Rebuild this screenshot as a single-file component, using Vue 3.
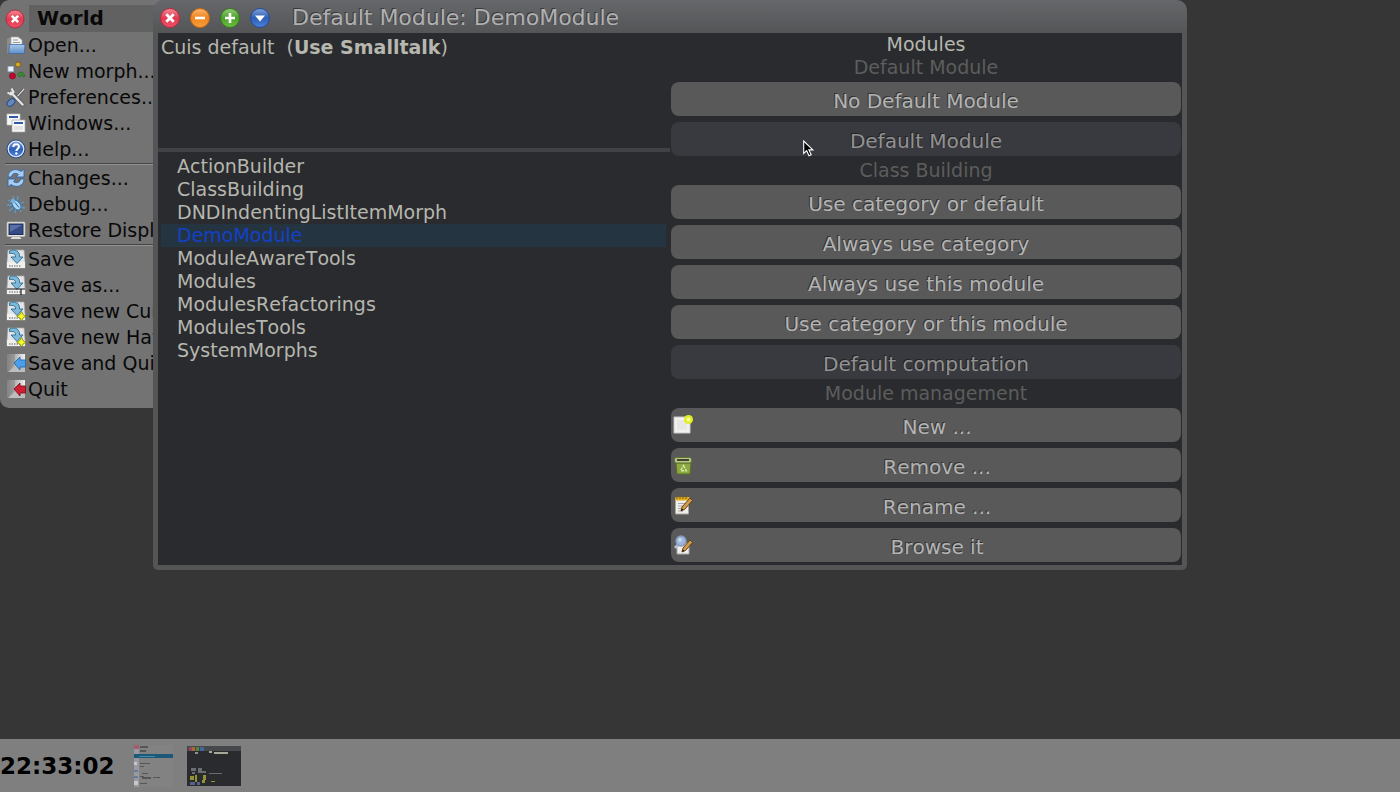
<script setup>
import { ref } from 'vue'

const menuGroups = [
  [
    { icon: 'open', label: 'Open...' },
    { icon: 'morph', label: 'New morph...' },
    { icon: 'prefs', label: 'Preferences...' },
    { icon: 'windows', label: 'Windows...' },
    { icon: 'help', label: 'Help...' },
  ],
  [
    { icon: 'changes', label: 'Changes...' },
    { icon: 'debug', label: 'Debug...' },
    { icon: 'display', label: 'Restore Display' },
  ],
  [
    { icon: 'save', label: 'Save' },
    { icon: 'saveas', label: 'Save as...' },
    { icon: 'savenew', label: 'Save new Cuis' },
    { icon: 'savenew', label: 'Save new Haver' },
    { icon: 'savequit', label: 'Save and Quit' },
    { icon: 'quit', label: 'Quit' },
  ],
]

const modules = [
  'ActionBuilder',
  'ClassBuilding',
  'DNDIndentingListItemMorph',
  'DemoModule',
  'ModuleAwareTools',
  'Modules',
  'ModulesRefactorings',
  'ModulesTools',
  'SystemMorphs',
]
const selected = ref('DemoModule')

const sections = [
  {
    title: 'Default Module',
    buttons: [{ label: 'No Default Module' }, { label: 'Default Module', active: true }],
  },
  {
    title: 'Class Building',
    buttons: [
      { label: 'Use category or default' },
      { label: 'Always use category' },
      { label: 'Always use this module' },
      { label: 'Use category or this module' },
      { label: 'Default computation', active: true },
    ],
  },
  {
    title: 'Module management',
    buttons: [
      { label: 'New ...', icon: 'new' },
      { label: 'Remove ...', icon: 'remove' },
      { label: 'Rename ...', icon: 'rename' },
      { label: 'Browse it', icon: 'browse' },
    ],
  },
]
</script>

<template>
  <div class="desktop">
    <svg class="defs" aria-hidden="true">
      <defs>
        <linearGradient id="gRed" x2="0" y2="1"><stop stop-color="#f58a96" /><stop offset=".5" stop-color="#e23a50" /><stop offset="1" stop-color="#ee5266" /></linearGradient>
        <linearGradient id="gOrange" x2="0" y2="1"><stop stop-color="#f9b56c" /><stop offset=".5" stop-color="#ee8420" /><stop offset="1" stop-color="#f8a03c" /></linearGradient>
        <linearGradient id="gGreen" x2="0" y2="1"><stop stop-color="#93cc78" /><stop offset=".5" stop-color="#4c9f2b" /><stop offset="1" stop-color="#6cc044" /></linearGradient>
        <linearGradient id="gBlue" x2="0" y2="1"><stop stop-color="#7fa2dc" /><stop offset=".5" stop-color="#2e5fb4" /><stop offset="1" stop-color="#4a82dc" /></linearGradient>
        <linearGradient id="gFolder" x2="0" y2="1"><stop stop-color="#a9c8ea" /><stop offset="1" stop-color="#5f8fc9" /></linearGradient>
        <linearGradient id="gDoor" x2="1" y2="0"><stop stop-color="#7c7c7c" /><stop offset=".5" stop-color="#b9b9b9" /><stop offset="1" stop-color="#f0f0f0" /></linearGradient>
      </defs>
    </svg>

    <main class="canvas">
      <nav class="world" aria-label="World">
        <header class="world-head">
          <button class="orb" aria-label="Close menu">
            <svg viewBox="0 0 20 20"><circle cx="10" cy="10" r="9" fill="url(#gRed)" stroke="#b52c3f" /><path d="M6.8 6.8l6.4 6.4M13.2 6.8l-6.4 6.4" stroke="#fff" stroke-width="2.6" /></svg>
          </button>
          <h1>World</h1>
        </header>
        <ul v-for="(group, g) in menuGroups" :key="g" class="group">
          <li v-for="item in group" :key="item.label">
            <button class="item">
              <svg viewBox="0 0 20 20" aria-hidden="true">
                <g v-if="item.icon === 'open'">
                  <path d="M2 3h5l1 2v13H1V4z" fill="#8b8b8b" /><path d="M5 2h7l4 3v8H5z" fill="#f2f2f0" stroke="#aaa" stroke-width=".7" /><path d="M7 5h5M7 7.5h7" stroke="#999" /><path d="M3.5 9.5h15.5l-.7 9H2.8z" fill="url(#gFolder)" stroke="#3c6ca8" stroke-width=".8" />
                </g>
                <g v-else-if="item.icon === 'morph'">
                  <rect x="2" y="5.5" width="5.5" height="5" fill="#eef4fa" stroke="#9db4cc" stroke-width=".8" /><circle cx="12" cy="3.5" r="2.6" fill="#d6a628" stroke="#785608" stroke-width=".8" /><circle cx="6.5" cy="15" r="3" fill="#c4082c" stroke="#80041c" stroke-width=".7" /><path d="M11.5 14c1-4 6-4 7.500 1l-2 1-1.500-2-1.500 2z" fill="#3f8a34" stroke="#286424" stroke-width=".7" />
                </g>
                <g v-else-if="item.icon === 'prefs'">
                  <path d="M17.5 2.5l-9 10" stroke="#333" stroke-width="2.4" /><path d="M18 2l-9 10" stroke="#ddd" stroke-width="1.3" /><path d="M5 5.5l11.500 12" stroke="#5c5c5c" stroke-width="4" stroke-linecap="round" /><path d="M5 5.500l11.500 12" stroke="#e2e2e2" stroke-width="2.500" stroke-linecap="round" /><path d="M1.500 5.500l3.500 2 2.500-2.500-2-3.500" fill="none" stroke="#e6e6e6" stroke-width="2" /><ellipse cx="5" cy="15.500" rx="4.500" ry="3" transform="rotate(-42 5 15.500)" fill="#6689bd" stroke="#284b86" />
                </g>
                <g v-else-if="item.icon === 'windows'">
                  <path d="M1 1h13v11H1z" fill="#f5f5f5" stroke="#ccc" stroke-width=".6" /><path d="M3 4h9" stroke="#2c5ba8" stroke-width="2" /><path d="M6 7h13v12H6z" fill="#f7f7f7" stroke="#aaa" stroke-width=".7" /><path d="M8 10h9" stroke="#2c5ba8" stroke-width="2" /><path d="M8 13h9v4H8z" fill="#e2e2e0" />
                </g>
                <g v-else-if="item.icon === 'help'">
                  <circle cx="10" cy="10" r="9" fill="#2b58a5" stroke="#254477" /><circle cx="10" cy="10" r="7.8" fill="url(#gBlue)" stroke="#dbe6f4" stroke-width="1.3" /><path d="M7.3 8c0-3.600 5.700-3.600 5.700-.4 0 2-2.700 2.200-2.700 4.500" fill="none" stroke="#fff" stroke-width="2" /><circle cx="10.3" cy="14.5" r="1.2" fill="#fff" />
                </g>
                <g v-else-if="item.icon === 'changes'">
                  <g fill="#a9cbee" stroke="#2e65a8" stroke-width=".9" stroke-linejoin="round"><path d="M2 9C2 2 10-.5 15 3.500L18 1v8h-8l2.500-2.500C9 4 6 6 5.500 9z" /><path d="M18 11c0 7-8 9.500-13 5.500L2 19v-8h8l-2.500 2.500c3.500 2.500 6.500.5 7-2.500z" /></g>
                </g>
                <g v-else-if="item.icon === 'debug'">
                  <path d="M7 2l1 5M12 2l-1 6M2 6l5 3M1 11h6M3 17l5-4M9 19l1-5M18 8l-5 2M19 14l-5-1M15 18l-2-4" stroke="#609bc6" stroke-width="1.3" /><ellipse cx="10.5" cy="11" rx="3.6" ry="5.5" transform="rotate(-38 10.5 11)" fill="#a8d5f5" stroke="#2d6fa6" /><circle cx="7" cy="7" r="2.2" fill="#79b2dc" /><path d="M9 8.5l4 5" stroke="#2b639b" />
                </g>
                <g v-else-if="item.icon === 'display'">
                  <rect x="1" y="2" width="18" height="14.5" rx="1" fill="#e8e8e3" stroke="#b4b4ae" stroke-width=".7" /><rect x="3" y="4" width="14" height="10.5" fill="#344b86" stroke="#1d2c58" /><path d="M4 5h12l-12 7z" fill="#5870a9" /><path d="M6 17h8l1.500 2h-11z" fill="#ddd" />
                </g>
                <g v-else-if="item.icon === 'save' || item.icon === 'saveas' || item.icon === 'savenew'">
                  <path d="M2 1h16l1 12v6H1v-6z" fill="#e3e5e6" stroke="#aaa" stroke-width=".7" /><path d="M1 13h18v6H1z" fill="#f0f0ee" /><path d="M3 17h12" stroke="#aaa" stroke-dasharray="1.5 1" stroke-width="2" /><path d="M3.5 2C9-.5 14 2 13.500 8H17l-6 6.500L5 8h4.500c.3-3-2-4-6-3.500z" fill="#80b9d8" stroke="#2b6e94" stroke-width=".9" />
                  <path v-if="item.icon === 'saveas'" d="M1 14h18M15 14v6" stroke="#111" stroke-width="1.1" />
                  <path v-if="item.icon === 'savenew'" d="M15.5 10.500l1.500 3 3 1.800-3 1.700-1.500 3-1.700-3-3-1.700 3-1.800z" fill="#f5fa26" stroke="#878b08" stroke-width=".9" />
                </g>
                <g v-else>
                  <path d="M1 1h18v18H1z" fill="url(#gDoor)" /><path d="M1 19L9 11V1H1z" fill="#888" opacity=".55" /><path d="M9 13h10v6H2z" fill="#bdbdbd" />
                  <path d="M8 10l6-6v3h5.500v7H14v3z" :fill="item.icon === 'quit' ? '#cf2036' : '#4a9fe8'" :stroke="item.icon === 'quit' ? '#86101f' : '#2768b0'" stroke-width=".9" />
                </g>
              </svg>
              <span>{{ item.label }}</span>
            </button>
          </li>
        </ul>
      </nav>

      <section class="window" aria-label="Default Module: DemoModule">
        <header class="titlebar">
          <button class="orb" aria-label="Close">
            <svg viewBox="0 0 20 20"><circle cx="10" cy="10" r="9.5" fill="url(#gRed)" stroke="#b52c3f" /><path d="M6.3 6.3l7.4 7.4M13.7 6.3l-7.4 7.4" stroke="#fff" stroke-width="2.8" /></svg>
          </button>
          <button class="orb" aria-label="Collapse">
            <svg viewBox="0 0 20 20"><circle cx="10" cy="10" r="9.5" fill="url(#gOrange)" stroke="#c4660c" /><path d="M5 10h10" stroke="#fff" stroke-width="2.6" /></svg>
          </button>
          <button class="orb" aria-label="Expand">
            <svg viewBox="0 0 20 20"><circle cx="10" cy="10" r="9.5" fill="url(#gGreen)" stroke="#357a1a" /><path d="M5 10h10M10 5v10" stroke="#fff" stroke-width="2.6" /></svg>
          </button>
          <button class="orb" aria-label="Window menu">
            <svg viewBox="0 0 20 20"><circle cx="10" cy="10" r="9.5" fill="url(#gBlue)" stroke="#234b96" /><path d="M5 7.5h10l-5 6z" fill="#fff" /></svg>
          </button>
          <h2>Default Module: DemoModule</h2>
        </header>

        <div class="body">
          <div class="left">
            <p class="info">Cuis default&nbsp; (<b>Use Smalltalk</b>)</p>
            <ul class="list">
              <li v-for="m in modules" :key="m">
                <button class="row" :class="{ on: m === selected }" @click="selected = m">{{ m }}</button>
              </li>
            </ul>
          </div>
          <div class="right">
            <h3 class="heading">Modules</h3>
            <template v-for="s in sections" :key="s.title">
              <h4 class="heading dim">{{ s.title }}</h4>
              <button v-for="b in s.buttons" :key="b.label" class="action" :class="{ active: b.active }">
                <svg v-if="b.icon" viewBox="0 0 20 20" aria-hidden="true">
                  <g v-if="b.icon === 'new'"><path d="M1 2h16v16H1z" fill="#f1f1ef" stroke="#c8c8c4" /><path d="M4 5h10v10H4z" fill="#e7e7e5" /><circle cx="15.5" cy="4.5" r="4.5" fill="#e2ee25" /><circle cx="15.5" cy="4.5" r="2" fill="#fbff9c" /></g>
                  <g v-else-if="b.icon === 'remove'"><path d="M3 8h15l-1 11H4z" fill="#8ba940" stroke="#587024" /><rect x="1.5" y="2.5" width="17" height="5.5" rx="2" fill="#b5c68a" stroke="#63782f" /><path d="M4 5h12" stroke="#43452f" stroke-width="2" /><path d="M10.5 10.500l2.800 5.200H7.700z" fill="none" stroke="#d8e7a9" stroke-width="1.4" stroke-dasharray="3 1" /></g>
                  <g v-else-if="b.icon === 'rename'"><path d="M2.500 3h13v16h-13z" fill="#f0eee8" stroke="#aaa69b" /><path d="M2.500 2h14v3.500h-14z" fill="#dcae1f" /><path d="M4 1v3M7 1v3M10 1v3M13 1v3" stroke="#775c11" /><path d="M5 8.500h8M5 11h7M5 13.500h5M5 16h5" stroke="#aaa" /><path d="M8 16l1-4 8-9 2.500 2.500-8 9z" fill="#d39b4c" stroke="#624017" /><path d="M8 16l1-2.500 1.500 1.200z" fill="#222" /></g>
                  <g v-else><path d="M4 8h12v11H4z" fill="#f0eee8" stroke="#aaa" /><path d="M6 9l-4 4" stroke="#b7bdc9" stroke-width="3" /><circle cx="8" cy="6" r="5" fill="#9eb6d9" stroke="#8297bb" stroke-width="1.3" /><circle cx="7" cy="5" r="2" fill="#c8d6ea" /><path d="M9 17l1-4 7-8 2.500 2.500-7 8z" fill="#d39b4c" stroke="#624017" /><path d="M9 17l1-2.500 1.500 1.200z" fill="#222" /></g>
                </svg>
                <span>{{ b.label }}</span>
              </button>
            </template>
          </div>
        </div>
      </section>

      <svg class="pointer" viewBox="0 0 11 17" aria-hidden="true"><path d="M.7 1v12.500l3-2.800 2.300 5 2.200-1-2.300-4.800h4z" fill="#000" stroke="#fff" stroke-width="1.1" /></svg>
    </main>

    <footer class="taskbar">
      <time>22:33:02</time>
      <button class="thumb menu-thumb" aria-label="Menu">
        <svg viewBox="0 0 39 42">
          <path d="M0 0h39v42H0z" fill="#828282" /><path d="M0 0h5v42H0z" fill="#989a9f" /><path d="M0 0h5v4H0z" fill="#a55d6b" /><path d="M0 9h39v4H0z" fill="#1c5877" /><path d="M5 11h16v1H5z" fill="#3d8cad" />
          <path d="M6 1h8v2h-8zM6 5h6v2h-6zM6 18h10v1h-10zM6 21h4v1h-4zM8 28h6v1h-6zM6 31h4v1h-4zM8 32h9v2h-9zM19 32h7v1h-7zM6 38h7v1h-7z" fill="#565656" />
          <path d="M0 17h3v3H0zM0 36h4v4H0z" fill="#c5c9cd" /><path d="M0 25h4v2H0zM0 31h4v2H0z" fill="#657ba0" />
        </svg>
      </button>
      <button class="thumb window-thumb" aria-label="Default Module: DemoModule">
        <svg viewBox="0 0 54 40">
          <path d="M0 0h54v40H0z" fill="#2a2b2e" /><path d="M0 0h54v5H0z" fill="#47484b" /><path d="M2 1h3v4H2z" fill="#934653" /><path d="M5 1h3v4H5z" fill="#a66b34" /><path d="M9 1h3v4H9z" fill="#518444" /><path d="M13 1h4v4h-4z" fill="#44669b" />
          <path d="M22 5h3v2h-3zM27 6h14v2H27z" fill="#a6a99a" /><path d="M8 6h3v2H8z" fill="#8c9190" />
          <path d="M4 22h5v3H4zM11 22h4v3h-4zM5 26h3v2H5zM11 25h8v2h-8zM22 27h13v1H22z" fill="#696c70" />
          <path d="M3 30h4v4H3zM8 29h2v7H8zM16 29h3v5h-3zM15 34h3v3h-3zM24 35h4v1h-4z" fill="#929334" /><path d="M3 36h5v3H3zM10 36h3v3h-3z" fill="#54618a" />
        </svg>
      </button>
    </footer>
  </div>
</template>

<style>
body {
  margin: 0;
  background: #363636;
}
</style>

<style scoped>
.desktop {
  display: flex;
  flex-direction: column;
  height: 100vh;
  overflow: hidden;
  background: #363636;
  font-family: 'DejaVu Sans', sans-serif;
  font-size: 19px;
  font-kerning: none;
}
.defs {
  position: absolute;
  width: 0;
  height: 0;
}
.canvas {
  position: relative;
  flex: 1;
}
button {
  border: 0;
  padding: 0;
  background: none;
  font: inherit;
  font-kerning: none;
  color: inherit;
  display: block;
}
ul, h1, h2, h3, h4, p {
  margin: 0;
  padding: 0;
  list-style: none;
  font-size: inherit;
  font-weight: normal;
}
svg {
  display: block;
}
.orb, .orb svg {
  width: 20px;
  height: 20px;
}

.world {
  position: absolute;
  left: 0;
  top: 0;
  box-sizing: border-box;
  width: 200px;
  padding: 5px 5px 6px;
  border-radius: 9px;
  background: #737373;
  color: #080808;
}
.world-head {
  display: flex;
  align-items: center;
  gap: 4px;
}
.world-head h1 {
  flex: 1;
  padding-left: 8px;
  line-height: 27px;
  font-size: 20px;
  font-weight: bold;
  background: #616161;
}
.group + .group {
  border-top: 1px solid #444;
  margin-top: 1px;
  padding-top: 1px;
  box-shadow: inset 0 1px #929292;
}
.item {
  display: flex;
  align-items: center;
  gap: 2px;
  padding-left: 1px;
  height: 26px;
  white-space: nowrap;
}
.item svg {
  width: 20px;
  height: 20px;
}

.window {
  position: absolute;
  left: 153px;
  top: 0;
  box-sizing: border-box;
  width: 1034px;
  padding: 0 5px 5px;
  border-radius: 10px 10px 5px 5px;
  background: linear-gradient(#66676a, #545557 33px, #555);
}
.titlebar {
  display: flex;
  align-items: center;
  gap: 10px;
  height: 33px;
  padding-left: 2px;
}
.titlebar .orb {
  margin-top: 2px;
}
.titlebar h2 {
  margin-left: 12px;
  padding-top: 2px;
  font-size: 22px;
  color: #b0b0b0;
  text-shadow: -1px -1px #38393b;
}
.body {
  display: grid;
  grid-template-columns: 1fr 1fr;
  background: #2a2b2e;
  color: #b6b7ae;
}
.left {
  display: flex;
  flex-direction: column;
}
.info {
  height: 112px;
  padding: 3px 3px 0;
  line-height: 23px;
  border-bottom: 4px solid #414244;
}
.list {
  padding: 3px 4px 0 3px;
}
.row {
  width: 100%;
  padding-left: 16px;
  line-height: 23px;
  text-align: left;
}
.row.on {
  background: #243541;
  color: #1440c8;
}
.right {
  text-align: center;
}
.heading {
  line-height: 23px;
}
.dim {
  color: #5c5d5c;
}
.action {
  display: flex;
  align-items: center;
  width: calc(100% - 2px);
  height: 34px;
  margin: 3px 1px 6px;
  border-radius: 8px;
  background: #595959;
  color: #b4b4b4;
  font-size: 20px;
  text-shadow: -1px -1px #333;
}
.action:has(+ .heading), .action:last-child {
  margin-bottom: 3px;
}
.action + .action {
  margin-top: 0;
}
.action span {
  flex: 1;
  padding-top: 4px;
}
.action.active {
  background: #393a3f;
  color: #929292;
  text-shadow: -1px -1px #222;
}
.action svg {
  width: 20px;
  height: 20px;
  margin-left: 2px;
}

.pointer {
  position: absolute;
  left: 803px;
  top: 140px;
  width: 11px;
  height: 17px;
}

.taskbar {
  display: flex;
  align-items: center;
  height: 53px;
  background: #7f7f7f;
}
.taskbar time {
  width: 134px;
  font-size: 23px;
  font-weight: bold;
  color: #000;
}
.menu-thumb svg {
  width: 39px;
  height: 42px;
}
.window-thumb {
  margin-left: 14px;
}
.window-thumb svg {
  width: 54px;
  height: 40px;
}
</style>
